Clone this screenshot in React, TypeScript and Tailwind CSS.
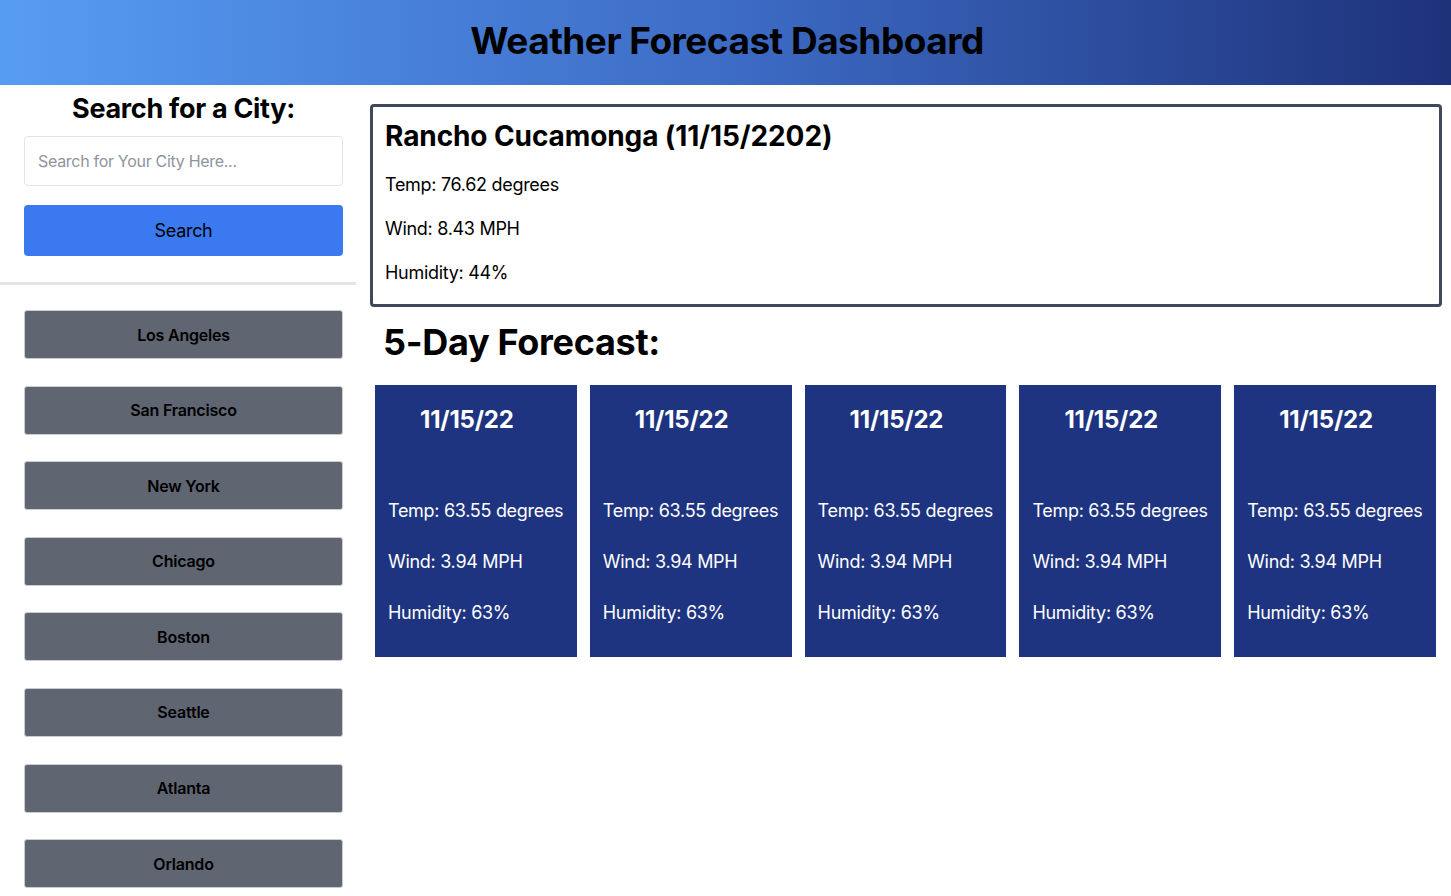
import React from "react";

const cities = ["Los Angeles", "San Francisco", "New York", "Chicago", "Boston", "Seattle", "Atlanta", "Orlando"];

function ForecastCard() {
  return (
    <div className="flex-1 bg-[#1e3480] text-white px-[13px] pt-[19px] h-[272px]">
      <h3 className="text-[24px] font-bold leading-[32px] pl-[32px] tracking-[-0.2px]">11/15/22</h3>
      <div className="mt-[63px] flex flex-col gap-[27px] text-[18px] leading-[24px] tracking-[-0.3px] whitespace-nowrap">
        <p>Temp: 63.55 degrees</p>
        <p>Wind: 3.94 MPH</p>
        <p>Humidity: 63%</p>
      </div>
    </div>
  );
}

export default function App() {
  return (
    <div className="min-h-[896px] bg-white text-black font-['Inter',sans-serif]">
      {/* header */}
      <header className="h-[85px] flex items-center justify-center bg-gradient-to-r from-[#579cf3] via-[#3d6cc6] to-[#1e327a]">
        <h1 className="text-[37px] font-bold leading-none tracking-[-0.5px] -mt-[4px] ml-[3px]">Weather Forecast Dashboard</h1>
      </header>

      <div className="flex">
        {/* sidebar */}
        <aside className="w-[356px] shrink-0">
          <div className="pl-[24px] pr-[13px]">
            <h2 className="text-center text-[27px] font-bold leading-[34px] mt-[7px] tracking-[-0.3px]">Search for a City:</h2>
            <input
              className="mt-[10px] w-full h-[50px] border border-[#e2e4e8] rounded-[4px] px-[13px] text-[16px] tracking-[-0.3px] placeholder:text-[#8e939c] outline-none"
              placeholder="Search for Your City Here..."
            />
            <button className="mt-[19px] w-full h-[51px] rounded-[4px] bg-[#3a79ef] text-[18px] text-black tracking-[-0.3px]">Search</button>
          </div>
          <div className="mt-[26px] h-[3px] bg-[#e3e4e8]" />
          <div className="pl-[24px] pr-[13px] pt-[25px] flex flex-col gap-[26.6px]">
            {cities.map((c) => (
              <button
                key={c}
                className="w-full h-[49px] bg-[#5f6571] border border-[#c9ccd2] rounded-[3px] text-[16px] font-semibold text-black tracking-[-0.2px]"
              >
                {c}
              </button>
            ))}
          </div>
        </aside>

        {/* main */}
        <main className="flex-1 pl-[14px] pr-[9px] pt-[19px]">
          <section className="border-[3px] border-[#3e4a5b] rounded-[4px] px-[12px] pt-[11px] h-[203px]">
            <h2 className="text-[28px] font-bold leading-[36px] tracking-[-0.1px]">Rancho Cucamonga (11/15/2202)</h2>
            <div className="mt-[19px] flex flex-col gap-[20px] text-[18px] leading-[24px] tracking-[-0.3px]">
              <p>Temp: 76.62 degrees</p>
              <p>Wind: 8.43 MPH</p>
              <p>Humidity: 44%</p>
            </div>
          </section>
          <h2 className="text-[36px] font-bold leading-[44px] mt-[13px] ml-[13px] tracking-[-0.3px]">5-Day Forecast:</h2>
          <div className="mt-[21px] ml-[5px] mr-[6px] flex gap-[13px]">
            <ForecastCard />
            <ForecastCard />
            <ForecastCard />
            <ForecastCard />
            <ForecastCard />
          </div>
        </main>
      </div>
    </div>
  );
}
